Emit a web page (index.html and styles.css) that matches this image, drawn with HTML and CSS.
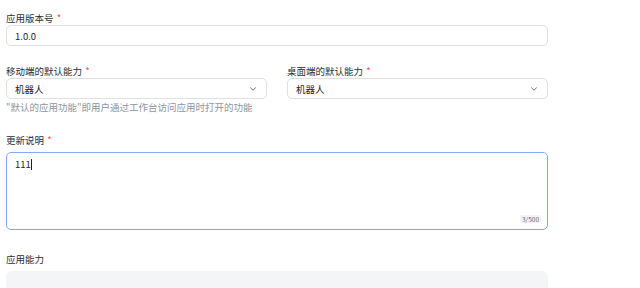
FILE: index.html
```html
<!DOCTYPE html>
<html lang="zh">
<head>
<meta charset="utf-8">
<link rel="stylesheet" href="styles.css">
</head>
<body>
<div class="form">
  <div class="field">
    <div class="label">应用版本号 <span class="req">*</span></div>
    <div class="input"><span class="value">1.0.0</span></div>
  </div>
  <div class="row">
    <div class="field col">
      <div class="label">移动端的默认能力 <span class="req">*</span></div>
      <div class="input select"><span class="value">机器人</span>
        <svg class="chev" width="10" height="10" viewBox="0 0 10 10"><path d="M2.5 3.8 L5 6.2 L7.5 3.8" fill="none" stroke="#6b7280" stroke-width="1" stroke-linecap="round" stroke-linejoin="round"/></svg>
      </div>
      <div class="help">"默认的应用功能"即用户通过工作台访问应用时打开的功能</div>
    </div>
    <div class="field col">
      <div class="label">桌面端的默认能力 <span class="req">*</span></div>
      <div class="input select"><span class="value">机器人</span>
        <svg class="chev" width="10" height="10" viewBox="0 0 10 10"><path d="M2.5 3.8 L5 6.2 L7.5 3.8" fill="none" stroke="#6b7280" stroke-width="1" stroke-linecap="round" stroke-linejoin="round"/></svg>
      </div>
    </div>
  </div>
  <div class="field notes">
    <div class="label">更新说明 <span class="req">*</span></div>
    <div class="textarea"><span class="value">111</span><span class="caret"></span>
      <span class="count">3/500</span>
    </div>
  </div>
  <div class="field cap">
    <div class="label">应用能力</div>
    <div class="capbox"></div>
  </div>
</div>
</body>
</html>
```
FILE: styles.css
```css
* { box-sizing: border-box; }
html, body { margin: 0; padding: 0; background: #fff; }
body {
  font-family: "Noto Sans CJK SC", "Noto Sans", sans-serif;
  color: #1f2329;
  overflow: hidden;
  height: 288px;
}
.form {
  width: 542px;
  margin-left: 6px;
  padding-top: 12px;
  display: flex;
  flex-direction: column;
}
.label {
  font-size: 9.5px;
  line-height: 12px;
  height: 12px;
  color: #2b2f36;
  margin-bottom: 1px;
  white-space: nowrap;
}
.req { color: #f54a45; margin-left: 1px; }
.input {
  height: 21px;
  border: 1px solid #dee0e3;
  border-radius: 5px;
  display: flex;
  align-items: center;
  padding: 0 8px;
}
.value { font-size: 9.5px; color: #1f2329; }
.select { justify-content: space-between; padding-right: 8px; }
.chev { flex: none; }
.row {
  display: flex;
  gap: 20px;
  margin-top: 19px;
}
.col { flex: 1; min-width: 0; }
.help {
  font-size: 9.5px;
  line-height: 12px;
  color: #8f959e;
  margin-top: 2px;
  white-space: nowrap;
}
.notes { margin-top: 21px; }
.notes .label { margin-bottom: 6px; }
.textarea {
  position: relative;
  height: 78px;
  border: 1px solid #82a7fc;
  border-radius: 5px;
  padding: 5px 8px;
  display: flex;
  align-items: flex-start;
}
.textarea .value { line-height: 12px; }
.caret { display: inline-block; width: 1px; height: 11px; background: #1f2329; margin-top: 1px; }
.count {
  position: absolute;
  right: 6px;
  bottom: 6px;
  font-size: 6.5px;
  line-height: 8px;
  padding: 0 2px;
  background: #f2f3f5;
  color: #646a73;
  border-radius: 2px;
}
.cap { margin-top: 23px; }
.cap .label { margin-bottom: 6px; }
.capbox {
  height: 40px;
  background: #f4f5f7;
  border-radius: 6px;
}
```
